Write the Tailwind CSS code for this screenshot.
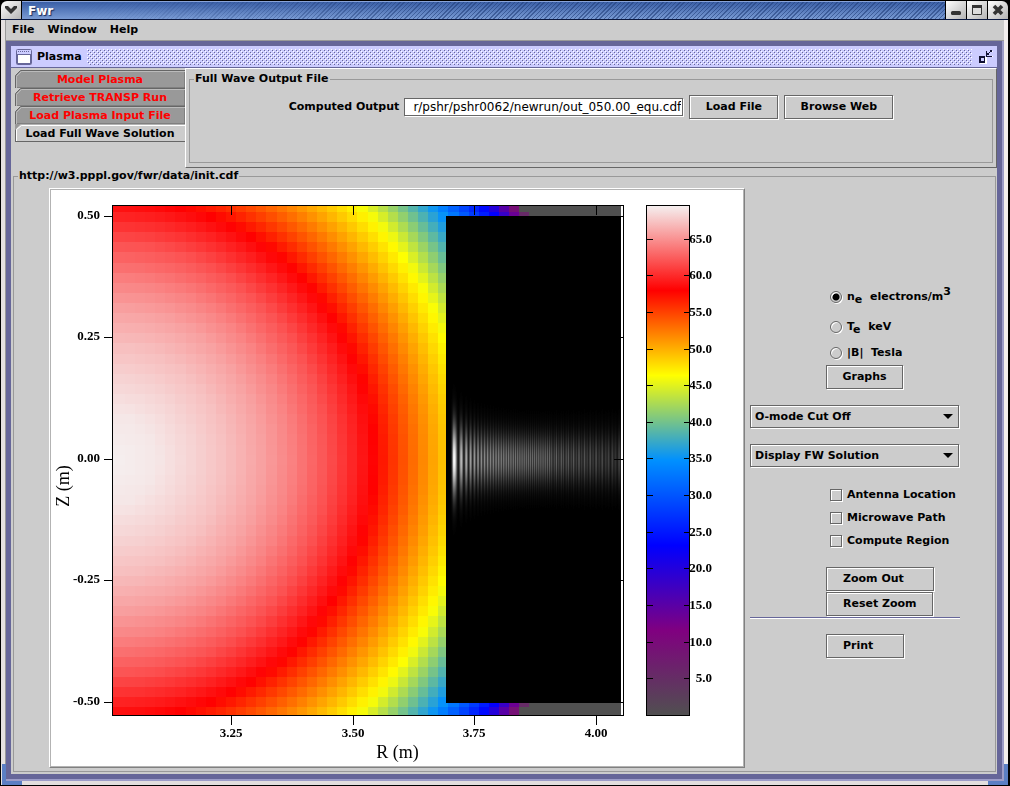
<!DOCTYPE html>
<html lang="en">
<head>
<meta charset="utf-8">
<title>Fwr</title>
<script src="https://cdn.jsdelivr.net/npm/@tailwindcss/browser@4"></script>
</head>
<body class="bg-black font-['DejaVu_Sans',sans-serif] text-[11px] leading-[14px] font-bold text-black">
<div class="relative flex min-h-screen flex-col overflow-hidden rounded-t-md border-r-2 border-b border-black bg-black pt-px pl-px">

  <!-- window title bar -->
  <header class="flex h-[19px] shrink-0 gap-px border-b border-[#0a1840] bg-black">
    <button aria-label="Window menu" class="flex w-5 items-center justify-center rounded-tl-md bg-linear-to-br from-white to-[#b4b4b4]">
      <svg width="14" height="10" viewBox="0 0 14 10"><path d="M1 1h3l3 3 3-3h3v2L7 9 1 3z" fill="#333"/></svg>
    </button>
    <div class="relative flex flex-1 items-center border-t border-[#8aa4d8] bg-linear-to-b from-[#3a5fa6] to-[#7a9bd4] pl-1.5">
      <div class="absolute inset-0 bg-[repeating-linear-gradient(135deg,#23407c99_0px,#23407c99_1px,transparent_1px,transparent_3px)] mask-[linear-gradient(to_right,transparent_5%,black_45%)]"></div>
      <h1 class="relative text-xs leading-4 text-white [text-shadow:1px_1px_1px_#1a2c5c]">Fwr</h1>
    </div>
    <div class="flex gap-px">
      <button aria-label="Minimize" class="flex w-5 items-center justify-center bg-linear-to-br from-white to-[#b4b4b4]">
        <svg width="12" height="12" viewBox="0 0 12 12"><rect x="1" y="7" width="10" height="4" rx="1.5" fill="#333"/></svg>
      </button>
      <button aria-label="Maximize" class="flex w-5 items-center justify-center bg-linear-to-br from-white to-[#b4b4b4]">
        <svg width="12" height="12" viewBox="0 0 12 12"><path d="M1 1h10v10H1z" fill="#ddd"/><path d="M1.500 1.500h9v9h-9z" fill="none" stroke="#333"/><path d="M1 1h10v3H1z" fill="#333"/></svg>
      </button>
      <button aria-label="Close" class="flex w-5 items-center justify-center rounded-tr-md bg-linear-to-br from-white to-[#b4b4b4]">
        <svg width="12" height="12" viewBox="0 0 12 12"><path d="M2 2l8 8M10 2l-8 8" stroke="#333" stroke-width="3.600"/></svg>
      </button>
    </div>
  </header>

  <div class="flex flex-1 flex-col border-x-4 border-b-4 border-l-[#e4e0e0] border-r-[#f2eeee] border-b-[#e2dede] bg-[#ccc]">
    <div class="flex flex-1 flex-col border-l border-[#999]">
      <nav class="flex h-[21px] shrink-0 items-center gap-[13px] border-b border-[#999] pl-1.5 text-[11px]">
        <button>File</button><button>Window</button><button>Help</button>
      </nav>

      <!-- desktop with its single internal frame -->
      <div class="flex flex-1 flex-col border-r-2 border-b-2 border-[#9c9cc8] bg-[#669]">
        <main class="m-[5px] flex flex-1 flex-col bg-[#ccc]">
          <div class="flex h-[22px] shrink-0 items-center border-b border-[#669] bg-[#ccf] pr-[3px] pl-[5px]">
            <svg class="mr-[5px] shrink-0" width="16" height="16" viewBox="0 0 16 16"><rect x=".5" y=".5" width="15" height="15" rx="1" fill="#fff" stroke="#669" /><path d="M1 1h14v4H1z" fill="#ccf"/><path d="M2 2.500h12" stroke="#669" stroke-dasharray="1 1"/><path d="M1 5.500h14M1.500 5v10M14.500 5v10M1 14.500h14" stroke="#669"/></svg>
            <h2 class="mr-[5px] text-[11px] leading-4">Plasma</h2>
            <svg class="h-4 min-w-0 flex-1" aria-hidden="true"><defs><pattern id="bumps" width="4" height="4" patternUnits="userSpaceOnUse"><path d="M0 0h1v1H0zM2 2h1v1H2z" fill="#fff"/><path d="M1 1h1v1H1zM3 3h1v1H3z" fill="#669"/></pattern></defs><rect width="100%" height="100%" fill="url(#bumps)"/></svg>
            <button aria-label="Restore" class="ml-1.5"><svg width="16" height="16" viewBox="0 0 16 16" shape-rendering="crispEdges"><path d="M2 8h7v7H2zM9 7h6v1H9zM14 2h1v1h-1z" fill="#fff"/><path d="M1 7h6v7H1zM8 2h1v5h5v1H8zM13 1h1v1h-1zM12 2h1v1h-1zM11 3h1v1h-1zM10 4h1v1h-1zM9 5h1v1H9zM9 4h1v1H9zM10 5h1v1h-1zM12 1h1v1h-1zM13 2h1v1h-1z" fill="#111133"/><path d="M3 9h3v3H3z" fill="#ccf"/></svg></button>
          </div>

          <div class="flex h-[100px] shrink-0">
            <div role="tablist" class="flex w-[174px] flex-col pt-0.5 pl-1">
              <button role="tab" class="relative h-[18px] pt-0.5 text-[red]">
                <svg class="absolute inset-0" width="170" height="18"><path d="M.5 18V5.500l5-5H170V18z" fill="#999" stroke="#666"/><path d="M1.500 18V6.500l5-5H170" fill="none" stroke="#bbb"/></svg><span class="relative">Model Plasma</span></button>
              <button role="tab" class="relative h-[18px] pt-0.5 text-[red]">
                <svg class="absolute inset-0" width="170" height="18"><path d="M.5 18V5.500l5-5H170V18z" fill="#999" stroke="#666"/><path d="M1.500 18V6.500l5-5H170" fill="none" stroke="#bbb"/></svg><span class="relative">Retrieve TRANSP Run</span></button>
              <button role="tab" class="relative h-[18px] pt-0.5 text-[red]">
                <svg class="absolute inset-0" width="170" height="18"><path d="M.5 18V5.500l5-5H170V18z" fill="#999" stroke="#666"/><path d="M1.500 18V6.500l5-5H170" fill="none" stroke="#bbb"/></svg><span class="relative">Load Plasma Input File</span></button>
              <button role="tab" aria-selected="true" class="relative h-[18px] pt-0.5">
                <svg class="absolute inset-0" width="170" height="18"><path d="M0 0h170v6H0z" fill="#999"/><path d="M.5 17.500V5.500l5-5H170v17z" fill="#ccc"/><path d="M0 17.500h170M.5 18V5.500" stroke="#666"/><path d="M1.500 17V5.500l5-4H170" fill="none" stroke="#fff"/></svg><span class="relative">Load Full Wave Solution</span></button>
            </div>
            <section role="tabpanel" class="flex flex-1 border border-t-white border-r-[#666] border-b-[#666] border-l-white px-[3px] pt-[3px] pb-1">
              <fieldset class="min-w-0 flex-1 border border-[#999]">
                <legend class="ml-1 px-px">Full Wave Output File</legend>
                <div class="flex items-center justify-center pt-[9px]">
                  <label for="path" class="mr-[5px]">Computed Output</label>
                  <input id="path" type="text" value="r/pshr/pshr0062/newrun/out_050.00_equ.cdf" class="mr-1.5 h-[18px] w-[279px] border border-[#666] bg-white px-px text-right text-xs font-normal shadow-[1px_1px_0_#fff]">
                  <button class="mr-1.5 h-6 w-[89px] border border-[#666] shadow-[inset_1px_1px_0_#fff,1px_1px_0_#fff]">Load File</button>
                  <button class="h-6 w-[109px] border border-[#666] shadow-[inset_1px_1px_0_#fff,1px_1px_0_#fff]">Browse Web</button>
                </div>
              </fieldset>
            </section>
          </div>

          <fieldset class="mt-px mr-px mb-0.5 ml-0.5 min-w-0 flex-1 border border-[#999]">
            <legend class="ml-1 px-px">http://w3.pppl.gov/fwr/data/init.cdf</legend>
            <div class="flex pt-[5px] pb-px pl-[35px]">
              <figure class="shrink-0 border border-t-white border-r-[#808080] border-b-[#808080] border-l-white">
                <div class="relative border border-[#b3b3b3] bg-white">
                  <canvas id="field" width="512" height="511" class="absolute top-[15px] left-[61px]"></canvas>
                  <svg id="axes" class="relative block" width="692" height="576" viewBox="51 190 692 576" font-family="'Liberation Serif',serif" font-weight="bold" font-size="13">
                    <defs><linearGradient id="scale" x1="0" y1="0" x2="0" y2="1">
                      <stop offset="0" stop-color="#f5f0f0"/><stop offset=".1667" stop-color="#f00"/><stop offset=".3333" stop-color="#ff0"/><stop offset=".5" stop-color="#0090ff"/><stop offset=".6667" stop-color="#00f"/><stop offset=".8333" stop-color="#800080"/><stop offset="1" stop-color="#505050"/>
                    </linearGradient></defs>
                    <rect x="112.500" y="205.500" width="511" height="510" fill="none" stroke="#000"/>
                    <rect x="646.500" y="205.500" width="43" height="510" fill="url(#scale)" stroke="#000"/>
                    <text x="397.500" y="758" text-anchor="middle" font-size="18" font-weight="normal">R (m)</text>
                    <text transform="translate(69 486) rotate(-90)" text-anchor="middle" font-size="18" font-weight="normal">Z (m)</text>
                  </svg>
                </div>
              </figure>

              <aside class="flex flex-1 flex-col pt-[94px] pl-[5px]">
                <div class="flex flex-col pl-[80px]">
                  <div class="flex h-[30px] items-center"><input type="radio" name="quantity" id="ne" checked class="size-3 appearance-none rounded-full border border-[#666] shadow-[inset_1px_1px_0_#fff,1px_1px_0_#fff] checked:bg-[radial-gradient(circle,#000_3px,transparent_4px)]"><label for="ne" class="pl-[5px] whitespace-pre">n<sub class="text-[11px]">e</sub>  electrons/m<sup class="text-[11px]">3</sup></label></div>
                  <div class="flex h-[30px] items-center"><input type="radio" name="quantity" id="te" class="size-3 appearance-none rounded-full border border-[#666] shadow-[inset_1px_1px_0_#fff,1px_1px_0_#fff] checked:bg-[radial-gradient(circle,#000_3px,transparent_4px)]"><label for="te" class="pl-[5px] whitespace-pre">T<sub class="text-[11px]">e</sub>  keV</label></div>
                  <div class="flex h-[22px] items-center"><input type="radio" name="quantity" id="b" class="size-3 appearance-none rounded-full border border-[#666] shadow-[inset_1px_1px_0_#fff,1px_1px_0_#fff] checked:bg-[radial-gradient(circle,#000_3px,transparent_4px)]"><label for="b" class="pl-[5px] whitespace-pre">|B|  Tesla</label></div>
                </div>
                <button class="mt-px ml-[76px] h-6 w-[77px] border border-[#666] shadow-[inset_1px_1px_0_#fff,1px_1px_0_#fff]">Graphs</button>
                <div class="relative mt-4 w-[209px]">
                  <select aria-label="Cut off mode" class="block h-[23px] w-full appearance-none border border-[#666] pl-1 shadow-[inset_1px_1px_0_#fff,1px_1px_0_#fff]"><option>O-mode Cut Off</option></select>
                  <svg class="pointer-events-none absolute top-[9px] right-1.5" width="10" height="5"><path d="M0 0h10L5 5z"/></svg>
                </div>
                <div class="relative mt-4 w-[209px]">
                  <select aria-label="Display" class="block h-[23px] w-full appearance-none border border-[#666] pl-1 shadow-[inset_1px_1px_0_#fff,1px_1px_0_#fff]"><option>Display FW Solution</option></select>
                  <svg class="pointer-events-none absolute top-[9px] right-1.5" width="10" height="5"><path d="M0 0h10L5 5z"/></svg>
                </div>
                <div class="mt-4 flex flex-col pl-[80px]">
                  <div class="flex h-[23px] items-center"><input type="checkbox" id="ant" class="size-3 appearance-none border border-[#666] shadow-[inset_1px_1px_0_#fff,1px_1px_0_#fff]"><label for="ant" class="pl-[5px]">Antenna Location</label></div>
                  <div class="flex h-[23px] items-center"><input type="checkbox" id="path2" class="size-3 appearance-none border border-[#666] shadow-[inset_1px_1px_0_#fff,1px_1px_0_#fff]"><label for="path2" class="pl-[5px]">Microwave Path</label></div>
                  <div class="flex h-[23px] items-center"><input type="checkbox" id="reg" class="size-3 appearance-none border border-[#666] shadow-[inset_1px_1px_0_#fff,1px_1px_0_#fff]"><label for="reg" class="pl-[5px]">Compute Region</label></div>
                </div>
                <button class="mt-[15px] ml-[76px] h-6 w-[108px] border border-[#666] pl-4 text-left shadow-[inset_1px_1px_0_#fff,1px_1px_0_#fff]">Zoom Out</button>
                <button class="mt-px ml-[76px] h-6 w-[107px] border border-[#666] pl-4 text-left shadow-[inset_1px_1px_0_#fff,1px_1px_0_#fff]">Reset Zoom</button>
                <hr class="mt-px h-0.5 w-[210px] border-0 bg-linear-to-b from-[#669] from-50% to-white to-50%">
                <button class="mt-[15px] ml-[76px] h-6 w-[78px] border border-[#666] pl-4 text-left shadow-[inset_1px_1px_0_#fff,1px_1px_0_#fff]">Print</button>
              </aside>
            </div>
          </fieldset>
        </main>
      </div>
    </div>
  </div>

  <!-- resize corners of the window frame -->
  <div class="absolute bottom-0 left-0.5 h-[21px] w-5 border-b-4 border-l-4 border-[#5b7fc4]"></div>
  <div class="absolute right-0 bottom-0 h-[21px] w-5 border-r-4 border-b-4 border-[#5b7fc4]"></div>
</div>

<script>
  const OX = 112, OY = 205;
  const ctx = document.getElementById('field').getContext('2d');
  const stops = [[80,80,80],[128,0,128],[0,0,255],[0,144,255],[255,255,0],[255,0,0],[245,240,240]];
  // radius in pixels from the magnetic axis -> position on the colour scale
  const profile = [[0,6],[45,5.96],[80,5.88],[112,5.8],[150,5.67],[179,5.54],[215,5.34],[246,5.12],[262,5],[354,4],[412,3],[452,2],[473,1],[483,0],[2000,0]];
  function level(r) {
    for (let i = 1; i < profile.length; i++) {
      const [r0, v0] = profile[i - 1], [r1, v1] = profile[i];
      if (r <= r1) return v0 + (v1 - v0) * (r - r0) / (r1 - r0);
    }
    return 0;
  }
  function colour(v) {
    const i = Math.min(5, Math.floor(v)), t = v - i;
    return 'rgb(' + stops[i].map((c, k) => Math.round(c + (stops[i + 1][k] - c) * t)).join(',') + ')';
  }
  const STEP = 10.11;
  const edgeX = i => Math.round(114.8 + STEP * i), edgeY = j => Math.round(212 + STEP * j);
  for (let i = -1; i < 51; i++) for (let j = -1; j < 50; j++) {
    const x0 = Math.max(112, edgeX(i)), x1 = Math.min(621, edgeX(i + 1));
    const y0 = Math.max(205, edgeY(j)), y1 = Math.min(715, edgeY(j + 1));
    if (x1 <= x0 || y1 <= y0) continue;
    const cx = 114.8 + STEP * (i + 0.5), cy = 212 + STEP * (j + 0.5);
    ctx.fillStyle = colour(level(Math.hypot(cx - 112, cy - 459.5)));
    ctx.fillRect(x0 - OX, y0 - OY, x1 - x0, y1 - y0);
  }
  ctx.fillStyle = '#000';
  ctx.fillRect(446 - OX, 216 - OY, 175, 487);
  // reflected wave: Airy-like fringes with a Gaussian beam profile
  for (let x = 450; x < 621; x++) {
    const s = (x + 0.5 - 450.9) / 3.2;
    if (s <= 0) continue;
    const ph = 2 / 3 * Math.pow(s, 1.5) + Math.PI / 4;
    const contrast = Math.max(0.5, 0.95 - s * 0.03);
    const amp = 255 * Math.min(1, Math.pow(s, -0.27)) * Math.min(1, s * 1.3) * (x > 560 ? 1 - (x - 560) / 250 : 1);
    const ripple = x > 550 ? 0.85 + 0.15 * Math.cos((x - 550) * 1.1) : 1;
    const peak = amp * ripple * (1 - contrast + contrast * Math.sin(ph) ** 2);
    const sigma = 16.5 + 8 * Math.exp(-(x - 450) / 25) + Math.max(0, x - 540) / 40;
    for (let y = 380; y < 540; y++) {
      const g = Math.round(peak * Math.exp(-((y - 459) ** 2) / (2 * sigma * sigma)));
      if (g < 2) continue;
      ctx.fillStyle = 'rgb(' + g + ',' + g + ',' + g + ')';
      ctx.fillRect(x - OX, y - OY, 1, 1);
    }
  }
  const svg = document.getElementById('axes');
  const add = (tag, attrs, text) => {
    const e = document.createElementNS('http://www.w3.org/2000/svg', tag);
    for (const k in attrs) e.setAttribute(k, attrs[k]);
    if (text) e.textContent = text;
    svg.appendChild(e);
  };
  const line = d => add('path', { d: d, stroke: '#000', fill: 'none' });
  [['3.25', 231], ['3.50', 353], ['3.75', 474], ['4.00', 596]].forEach(([t, x]) => {
    line('M' + (x + 0.5) + ' 205v10M' + (x + 0.5) + ' 715v10');
    add('text', { x: x, y: 737, 'text-anchor': 'middle' }, t);
  });
  [['0.50', 216], ['0.25', 337], ['0.00', 459], ['-0.25', 580], ['-0.50', 702]].forEach(([t, y]) => {
    line('M104 ' + (y + 0.5) + 'h8M614 ' + (y + 0.5) + 'h9');
    add('text', { x: 100, y: y + 3, 'text-anchor': 'end' }, t);
  });
  for (let v = 5; v <= 65; v += 5) {
    const y = Math.round(715 - v * 7.33) + 0.5;
    line('M647 ' + y + 'h6M684 ' + y + 'h6');
    add('text', { x: 712, y: y + 3, 'text-anchor': 'end' }, v.toFixed(1));
  }
</script>
</body>
</html>
